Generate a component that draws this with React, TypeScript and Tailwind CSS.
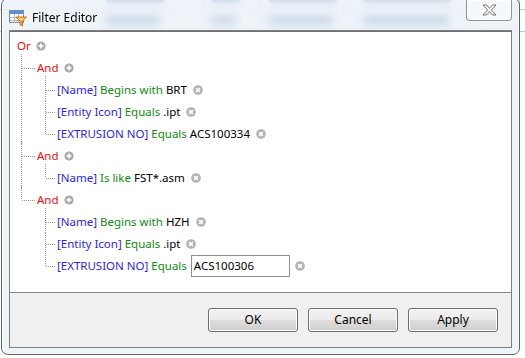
import React from 'react'

type Row =
  | { kind: 'group'; level: 0 | 1; label: string; lastGroup?: boolean }
  | {
      kind: 'cond'
      field: string
      op: string
      value: string
      parentLast: boolean
      first: boolean
      last: boolean
      editing?: boolean
    }

const ROWS: Row[] = [
  { kind: 'group', level: 0, label: 'Or' },
  { kind: 'group', level: 1, label: 'And' },
  { kind: 'cond', field: '[Name]', op: 'Begins with', value: 'BRT', parentLast: false, first: true, last: false },
  { kind: 'cond', field: '[Entity Icon]', op: 'Equals', value: '.ipt', parentLast: false, first: false, last: false },
  { kind: 'cond', field: '[EXTRUSION NO]', op: 'Equals', value: 'ACS100334', parentLast: false, first: false, last: true },
  { kind: 'group', level: 1, label: 'And' },
  { kind: 'cond', field: '[Name]', op: 'Is like', value: 'FST*.asm', parentLast: false, first: true, last: true },
  { kind: 'group', level: 1, label: 'And', lastGroup: true },
  { kind: 'cond', field: '[Name]', op: 'Begins with', value: 'HZH', parentLast: true, first: true, last: false },
  { kind: 'cond', field: '[Entity Icon]', op: 'Equals', value: '.ipt', parentLast: true, first: false, last: false },
  { kind: 'cond', field: '[EXTRUSION NO]', op: 'Equals', value: 'ACS100306', parentLast: true, first: false, last: true, editing: true },
]

const DOT = { stroke: '#9a9a9a', strokeWidth: 1, strokeDasharray: '1 1', shapeRendering: 'crispEdges' as const }

function PlusIcon() {
  return (
    <svg width="10" height="10" viewBox="0 0 10 10" className="ml-[5px] shrink-0">
      <circle cx="5" cy="5" r="4.6" fill="#a9a9a9" />
      <path d="M5 2.4v5.2M2.4 5h5.2" stroke="#fff" strokeWidth="1.6" />
    </svg>
  )
}

function RemoveIcon({ ml = 'ml-[6px]' }: { ml?: string }) {
  return (
    <svg width="10" height="10" viewBox="0 0 10 10" className={`${ml} shrink-0`}>
      <circle cx="5" cy="5" r="4.8" fill="#b3b3b3" />
      <path d="M3.1 3.1l3.8 3.8M6.9 3.1l-3.8 3.8" stroke="#fff" strokeWidth="1.5" />
    </svg>
  )
}

function Gutter({ row }: { row: Row }) {
  if (row.kind === 'group') {
    if (row.level === 0) return <div className="w-[7px] shrink-0" />
    return (
      <svg width="27" height="22" className="shrink-0 overflow-visible">
        <line x1="11.5" y1={-3} x2="11.5" y2={row.lastGroup ? 11 : 22} style={DOT} />
        <line x1="12" y1="11.5" x2="26" y2="11.5" style={DOT} />
      </svg>
    )
  }
  return (
    <svg width="47" height="22" className="shrink-0 overflow-visible">
      {!row.parentLast && <line x1="11.5" y1="0" x2="11.5" y2="22" style={DOT} />}
      <line x1="35.5" y1={row.first ? -3 : 0} x2="35.5" y2={row.last ? 11 : 22} style={DOT} />
      <line x1="36" y1="11.5" x2="46" y2="11.5" style={DOT} />
    </svg>
  )
}

function TreeRow({ row }: { row: Row }) {
  return (
    <div className="flex items-center h-[22px] whitespace-pre">
      <Gutter row={row} />
      {row.kind === 'group' ? (
        <>
          <span className="text-[#f00a0a]">{row.label}</span>
          <PlusIcon />
        </>
      ) : (
        <>
          <span className="text-[#2a1ef0]">{row.field}</span>
          <span> </span>
          <span className="text-[#118a11]">{row.op}</span>
          <span> </span>
          {row.editing ? (
            <>
              <div className="ml-[1px] w-[99px] h-[22px] border border-[#8f8f8f] bg-white flex items-center pl-[2px] text-black">
                {row.value}
              </div>
              <RemoveIcon ml="ml-[5px]" />
            </>
          ) : (
            <>
              <span className="text-black">{row.value}</span>
              <RemoveIcon />
            </>
          )}
        </>
      )}
    </div>
  )
}

function TitleIcon() {
  return (
    <svg width="18" height="17" viewBox="0 0 18 17" className="shrink-0">
      <rect x="0.5" y="0.5" width="14" height="12" fill="#fff" stroke="#7d8ea8" />
      <rect x="1" y="1" width="13" height="3" fill="#5b8fd6" />
      <path d="M1 7.5h13M1 10.5h13M5.5 4v9M9.5 4v9" stroke="#a9b7c9" />
      <path d="M7 7h10.5l-4 4.2v4.8l-2.5-1.2v-3.6z" fill="#f5a623" stroke="#c26a0a" strokeWidth="0.8" />
      <path d="M8.8 8h7l-2.6 2.6h-1.8z" fill="#ffd56a" />
    </svg>
  )
}

function CloseGlyph() {
  return (
    <svg width="15" height="12" viewBox="0 0 15 12">
      <path
        d="M1 1h3.6L7.5 4.3 10.4 1H14L9.4 6 14 11h-3.6L7.5 7.7 4.6 11H1l4.6-5z"
        fill="#f4f4f4"
        stroke="#6b6b6b"
        strokeWidth="0.9"
        strokeLinejoin="round"
      />
    </svg>
  )
}

function WinButton({ label }: { label: string }) {
  return (
    <button className="w-[90px] h-[24px] rounded-[3px] border border-[#707070] bg-[linear-gradient(#f2f2f2_0%,#ebebeb_50%,#dddddd_50%,#cfcfcf_100%)] shadow-[inset_0_0_0_1px_#fbfbfb] text-[12px] text-black leading-none">
      {label}
    </button>
  )
}

// smudged table behind the dialog: widths of the blurred cell contents
const BG_CELLS = [
  [0, 60, 30, 70, 90, 0],
  [0, 56, 26, 66, 88, 0],
]

export default function App() {
  return (
    <div className="relative w-[525px] h-[358px] overflow-hidden bg-white font-['Noto_Sans','Open_Sans',sans-serif] text-[11.5px]">
      {/* desktop content behind the dialog */}
      <div className="absolute inset-0 flex flex-col">
        {BG_CELLS.map((r, i) => (
          <div key={i} className={`flex h-[22px] items-center border-b border-[#b9c6d4] ${i === 0 ? '-mt-[12px]' : ''}`}>
            <div className="w-[75px] h-full border-r border-[#b9c6d4]" />
            <div className="w-[130px] h-full border-r border-[#b9c6d4] pl-[30px] flex items-center">
              <div className="h-[9px] rounded-full bg-[#4f78b8]/70" style={{ width: r[1] }} />
            </div>
            <div className="w-[55px] h-full border-r border-[#b9c6d4] pl-[6px] flex items-center">
              <div className="h-[9px] rounded-full bg-[#4f78b8]/70" style={{ width: r[2] }} />
            </div>
            <div className="w-[90px] h-full border-r border-[#b9c6d4] pl-[8px] flex items-center">
              <div className="h-[9px] rounded-full bg-[#4f78b8]/70" style={{ width: r[3] }} />
            </div>
            <div className="w-[125px] h-full border-r border-[#b9c6d4] pl-[12px] flex items-center">
              <div className="h-[9px] rounded-full bg-[#4f78b8]/70" style={{ width: r[4] }} />
            </div>
            <div className="w-[45px] h-full border-r border-[#b9c6d4]" />
          </div>
        ))}
      </div>

      {/* dialog window */}
      <div className="absolute left-[1px] top-[-2px] w-[519px] h-[357px] rounded-[7px] border border-[#5d6166] bg-[#e8eff6]/70 backdrop-blur-[4px] shadow-[inset_0_0_0_1px_rgba(255,255,255,0.8)] flex flex-col">
        <div className="flex items-start h-[31px] shrink-0">
          <div className="flex items-center gap-[5px] pl-[7px] pt-[10px]">
            <TitleIcon />
            <span className="text-[12px] text-black">Filter Editor</span>
          </div>
          <div className="ml-auto mr-[7px] mt-[1px] w-[46px] h-[21px] rounded-b-[4px] border border-t-0 border-[#8d959e] bg-white/40 shadow-[inset_0_0_0_1px_rgba(255,255,255,0.7)] flex items-center justify-center">
            <CloseGlyph />
          </div>
        </div>

        <div className="mx-[7px] h-[318px] border border-[#7d8186] flex flex-col bg-[#f0f0f0]">
          <div className="h-[262px] shrink-0 bg-white border-b border-[#828790] border-t border-t-[#6e6e6e] pt-[3px] flex flex-col">
            {ROWS.map((r, i) => (
              <TreeRow key={i} row={r} />
            ))}
          </div>
          <div className="flex-1 flex justify-end items-start gap-[10px] pt-[15px] pr-[13px]">
            <WinButton label="OK" />
            <WinButton label="Cancel" />
            <WinButton label="Apply" />
          </div>
        </div>
      </div>
    </div>
  )
}
